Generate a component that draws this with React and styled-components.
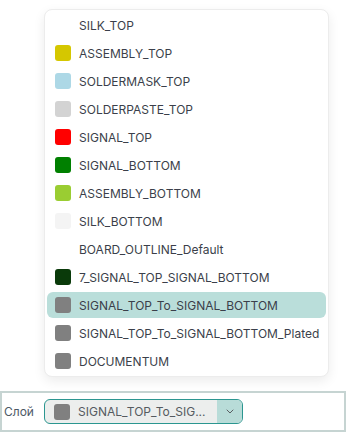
import React from "react";
import styled, { createGlobalStyle } from "styled-components";

const GlobalStyle = createGlobalStyle`
    html, body {
        margin: 0;
        padding: 0;
        background: #ffffff;
        font-family: Inter, "Noto Sans", sans-serif;
    }
`;

const Page = styled.div`
    position: relative;
    width: 347px;
    height: 432px;
    padding-top: 391px;
    box-sizing: border-box;
    overflow: hidden;
`;

const Frame = styled.div`
    width: 346px;
    height: 41px;
    box-sizing: border-box;
    border: 2px solid #c6d4d2;
    display: flex;
    align-items: center;
    padding-left: 2px;
    gap: 10px;
`;

const Label = styled.span`
    font-size: 12px;
    color: #4d5966;
    width: 30px;
`;

const Select = styled.div`
    width: 199px;
    height: 25px;
    box-sizing: border-box;
    border: 1px solid #2b9690;
    border-radius: 6px;
    background: #eceeed;
    display: flex;
    align-items: center;
    overflow: hidden;
`;

const SelectValue = styled.div`
    flex: 1;
    display: flex;
    align-items: center;
    gap: 8px;
    padding-left: 9px;
    font-size: 12px;
    color: #555b60;
    white-space: nowrap;
`;

const Chevron = styled.div`
    width: 25px;
    height: 100%;
    background: #b8dcd8;
    display: flex;
    align-items: center;
    justify-content: center;
`;

const Menu = styled.div`
    position: absolute;
    left: 44px;
    top: 9px;
    width: 285px;
    box-sizing: border-box;
    padding: 2px;
    background: #ffffff;
    border: 1px solid #ececec;
    border-radius: 8px;
    box-shadow: 0 4px 12px rgba(0, 0, 0, 0.08);
    display: flex;
    flex-direction: column;
    gap: 2px;
`;

const Option = styled.div`
    height: 26px;
    display: flex;
    align-items: center;
    gap: 8px;
    padding-left: 8px;
    border-radius: 6px;
    background: ${p => (p.selected ? "#badeda" : "transparent")};
    font-size: 12px;
    color: #3b3f4a;
    white-space: nowrap;
`;

const Swatch = styled.span`
    width: 16px;
    height: 16px;
    border-radius: 3px;
    flex-shrink: 0;
    background: ${p => p.color};
`;

const layers = [
    { name: "SILK_TOP", color: "#ffffff" },
    { name: "ASSEMBLY_TOP", color: "#d5c700" },
    { name: "SOLDERMASK_TOP", color: "#add8e6" },
    { name: "SOLDERPASTE_TOP", color: "#d3d3d3" },
    { name: "SIGNAL_TOP", color: "#ff0000" },
    { name: "SIGNAL_BOTTOM", color: "#008000" },
    { name: "ASSEMBLY_BOTTOM", color: "#9acd32" },
    { name: "SILK_BOTTOM", color: "#f4f4f4" },
    { name: "BOARD_OUTLINE_Default", color: "#ffffff" },
    { name: "7_SIGNAL_TOP_SIGNAL_BOTTOM", color: "#0a3a0a" },
    { name: "SIGNAL_TOP_To_SIGNAL_BOTTOM", color: "#808080" },
    { name: "SIGNAL_TOP_To_SIGNAL_BOTTOM_Plated", color: "#808080" },
    { name: "DOCUMENTUM", color: "#808080" },
];

export default function App() {
    return (
        <Page>
            <GlobalStyle />
            <Frame>
                <Label>Слой</Label>
                <Select>
                    <SelectValue>
                        <Swatch color="#808080" />
                        SIGNAL_TOP_To_SIG...
                    </SelectValue>
                    <Chevron>
                        <svg width="8" height="5" viewBox="0 0 8 5" fill="none">
                            <path d="M1 1l3 3 3-3" stroke="#5a5f63" strokeWidth="1" strokeLinecap="round" strokeLinejoin="round" />
                        </svg>
                    </Chevron>
                </Select>
            </Frame>
            <Menu>
                {layers.map(l => (
                    <Option key={l.name} selected={l.name === "SIGNAL_TOP_To_SIGNAL_BOTTOM"}>
                        <Swatch color={l.color} />
                        {l.name}
                    </Option>
                ))}
            </Menu>
        </Page>
    );
}
